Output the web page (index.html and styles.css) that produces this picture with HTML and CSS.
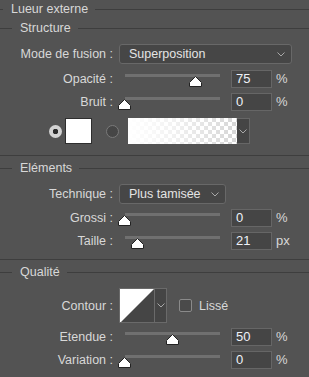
FILE: index.html
```html
<!DOCTYPE html>
<html lang="fr">
<head>
    <meta charset="UTF-8">
    <meta name="viewport" content="width=device-width, initial-scale=1.0">
    <title>Lueur externe</title>
    <link rel="stylesheet" href="styles.css">
</head>
<body>

<div class="panel">
    <div class="legend title"><span>Lueur externe</span></div>

    <!-- Structure -->
    <div class="legend group g-structure"><span>Structure</span></div>
    <div class="row r-mode">
        <label>Mode de fusion :</label>
        <div class="select select-mode">Superposition
            <svg class="chev" width="8" height="5" viewBox="0 0 8 5"><path d="M0.5 0.5 L4 4 L7.5 0.5" fill="none" stroke="#a8a8a8" stroke-width="1"/></svg>
        </div>
    </div>
    <div class="row slide r-opacity">
        <label>Opacité :</label>
        <div class="slider"><div class="track"></div><svg class="thumb" style="left: 75%" width="13" height="11" viewBox="0 0 13 11"><path d="M6.5 0.5 L12.5 6.5 L12.5 10.5 L0.5 10.5 L0.5 6.5 Z" fill="#fff" stroke="#222"/></svg></div>
        <div class="num">75</div>
        <span class="unit">%</span>
    </div>
    <div class="row slide r-noise">
        <label>Bruit :</label>
        <div class="slider"><div class="track"></div><svg class="thumb" style="left: 0%" width="13" height="11" viewBox="0 0 13 11"><path d="M6.5 0.5 L12.5 6.5 L12.5 10.5 L0.5 10.5 L0.5 6.5 Z" fill="#fff" stroke="#222"/></svg></div>
        <div class="num">0</div>
        <span class="unit">%</span>
    </div>
    <div class="color-row">
        <span class="radio on"></span>
        <span class="swatch"></span>
        <span class="radio off"></span>
        <span class="gradient"></span>
        <span class="grad-drop">
            <svg width="8" height="5" viewBox="0 0 8 5"><path d="M0.5 0.5 L4 4 L7.5 0.5" fill="none" stroke="#a8a8a8" stroke-width="1"/></svg>
        </span>
    </div>
    <div class="sep s-first"></div>

    <!-- Eléments -->
    <div class="legend group g-elements"><span>Eléments</span></div>
    <div class="row r-tech">
        <label>Technique :</label>
        <div class="select select-tech">Plus tamisée
            <svg class="chev" width="8" height="5" viewBox="0 0 8 5"><path d="M0.5 0.5 L4 4 L7.5 0.5" fill="none" stroke="#a8a8a8" stroke-width="1"/></svg>
        </div>
    </div>
    <div class="row slide r-spread">
        <label>Grossi :</label>
        <div class="slider"><div class="track"></div><svg class="thumb" style="left: 0%" width="13" height="11" viewBox="0 0 13 11"><path d="M6.5 0.5 L12.5 6.5 L12.5 10.5 L0.5 10.5 L0.5 6.5 Z" fill="#fff" stroke="#222"/></svg></div>
        <div class="num">0</div>
        <span class="unit">%</span>
    </div>
    <div class="row slide r-size">
        <label>Taille :</label>
        <div class="slider"><div class="track"></div><svg class="thumb" style="left: 14%" width="13" height="11" viewBox="0 0 13 11"><path d="M6.5 0.5 L12.5 6.5 L12.5 10.5 L0.5 10.5 L0.5 6.5 Z" fill="#fff" stroke="#222"/></svg></div>
        <div class="num">21</div>
        <span class="unit">px</span>
    </div>
    <div class="sep s-second"></div>

    <!-- Qualité -->
    <div class="legend group g-quality"><span>Qualité</span></div>
    <div class="row r-contour">
        <label>Contour :</label>
        <div class="contour">
            <span class="curve">
                <svg width="34" height="34" viewBox="0 0 34 34"><rect width="34" height="34" fill="#454545"/><path d="M0 0 H34 L0 34 Z" fill="#fff"/></svg>
            </span>
            <span class="curve-drop">
                <svg width="8" height="5" viewBox="0 0 8 5"><path d="M0.5 0.5 L4 4 L7.5 0.5" fill="none" stroke="#a8a8a8" stroke-width="1"/></svg>
            </span>
        </div>
        <span class="check"></span>
        <span class="check-label">Lissé</span>
    </div>
    <div class="row slide r-range">
        <label>Etendue :</label>
        <div class="slider"><div class="track"></div><svg class="thumb" style="left: 50%" width="13" height="11" viewBox="0 0 13 11"><path d="M6.5 0.5 L12.5 6.5 L12.5 10.5 L0.5 10.5 L0.5 6.5 Z" fill="#fff" stroke="#222"/></svg></div>
        <div class="num">50</div>
        <span class="unit">%</span>
    </div>
    <div class="row slide r-jitter">
        <label>Variation :</label>
        <div class="slider"><div class="track"></div><svg class="thumb" style="left: 0%" width="13" height="11" viewBox="0 0 13 11"><path d="M6.5 0.5 L12.5 6.5 L12.5 10.5 L0.5 10.5 L0.5 6.5 Z" fill="#fff" stroke="#222"/></svg></div>
        <div class="num">0</div>
        <span class="unit">%</span>
    </div>
</div>

</body>
</html>
```

FILE: styles.css
```css
body {
    margin: 0;
    padding: 0;
    background-color: #535353;
    color: #d8d8d8;
    font-family: 'Liberation Sans', Arial, sans-serif;
    font-size: 12.5px;
}
.panel {
    width: 309px;
    height: 377px;
    display: flex;
    flex-direction: column;
    overflow: hidden;
}
/* titres avec ligne */
.legend {
    display: flex;
    align-items: center;
    height: 18px;
}
.legend::before,
.legend::after {
    content: "";
    height: 1px;
    background-color: #3e3e3e;
}
.legend::before {
    width: 3px;
}
.legend::after {
    flex: 1;
}
.legend span {
    padding: 0 7px 0 8px;
}
.legend.group::before {
    width: 12px;
}
.g-structure { margin-top: 1px; }
.g-elements { margin-top: 3px; }
.g-quality { margin-top: 3px; }
.sep {
    height: 1px;
    background-color: #3e3e3e;
}
.s-first { margin-top: 11px; }
.s-second { margin-top: 9px; }

/* lignes de réglage */
.row {
    display: flex;
    align-items: center;
}
.row label {
    width: 113px;
    text-align: right;
    flex-shrink: 0;
}
.r-mode { margin-top: 7px; height: 20px; }
.r-opacity { margin-top: 6px; }
.r-noise { margin-top: 5px; }
.r-tech { margin-top: 7px; height: 20px; }
.r-spread { margin-top: 5px; }
.r-size { margin-top: 5px; }
.r-contour { margin-top: 7px; height: 35px; }
.r-range { margin-top: 5px; }
.r-jitter { margin-top: 5px; }

.select {
    position: relative;
    box-sizing: border-box;
    height: 20px;
    margin-left: 6px;
    padding-left: 9px;
    line-height: 18px;
    background-color: #464646;
    border: 1px solid #686868;
    border-radius: 3px;
    color: #e4e4e4;
}
.select-mode { width: 173px; }
.select-tech { width: 107px; }
.select .chev {
    position: absolute;
    right: 6px;
    top: 7px;
}

.slide {
    height: 18px;
    align-items: flex-start;
}
.slide label {
    line-height: 18px;
}
.slider {
    position: relative;
    width: 95px;
    height: 18px;
    margin-left: 12px;
}
.track {
    margin-top: 4px;
    height: 3px;
    background-color: #707070;
}
.thumb {
    position: absolute;
    top: 6px;
    margin-left: -7px;
}
.num {
    box-sizing: border-box;
    width: 41px;
    height: 18px;
    margin-left: 11px;
    padding-left: 4px;
    line-height: 16px;
    background-color: #454545;
    border: 1px solid #666;
    color: #eef2f8;
    font-size: 13px;
}
.unit {
    margin-left: 4px;
    line-height: 18px;
    font-size: 13px;
}

/* couleur */
.color-row {
    display: flex;
    align-items: center;
    height: 26px;
    margin-top: 7px;
}
.radio {
    box-sizing: border-box;
    width: 13px;
    height: 13px;
    border-radius: 50%;
}
.radio.on {
    margin-left: 49px;
    background: radial-gradient(circle, #2b2b2b 0, #2b2b2b 2.5px, #d2d2d2 3px);
}
.radio.off {
    margin-left: 14px;
    background-color: #464646;
    border: 1px solid #7a7a7a;
}
.swatch {
    box-sizing: border-box;
    width: 27px;
    height: 26px;
    margin-left: 3px;
    background-color: #fff;
    border: 1px solid #2e2e2e;
}
.gradient {
    width: 109px;
    height: 26px;
    margin-left: 9px;
    background-color: #fff;
    background-image:
        linear-gradient(to right, #fff 0%, rgba(255, 255, 255, 0.7) 40%, rgba(255, 255, 255, 0) 100%),
        linear-gradient(45deg, #d6d6d6 25%, transparent 25%, transparent 75%, #d6d6d6 75%),
        linear-gradient(45deg, #d6d6d6 25%, transparent 25%, transparent 75%, #d6d6d6 75%);
    background-size: 100% 100%, 8px 8px, 8px 8px;
    background-position: 0 0, 0 0, 4px 4px;
}
.grad-drop {
    box-sizing: border-box;
    width: 13px;
    height: 26px;
    display: flex;
    align-items: center;
    justify-content: center;
    border: 1px solid #666;
    border-left: none;
    background-color: #454545;
}

/* contour */
.contour {
    display: flex;
    margin-left: 6px;
    height: 35px;
}
.curve {
    box-sizing: border-box;
    width: 35px;
    height: 35px;
    border: 1px solid #6a6a6a;
    border-right: none;
    overflow: hidden;
}
.curve svg {
    display: block;
}
.curve-drop {
    box-sizing: border-box;
    width: 13px;
    height: 35px;
    display: flex;
    align-items: center;
    justify-content: center;
    border: 1px solid #6a6a6a;
    background-color: #454545;
}
.check {
    box-sizing: border-box;
    width: 13px;
    height: 13px;
    margin-left: 12px;
    border: 1px solid #8a8a8a;
    border-radius: 2px;
    background-color: #4a4a4a;
}
.check-label {
    margin-left: 7px;
}
```
